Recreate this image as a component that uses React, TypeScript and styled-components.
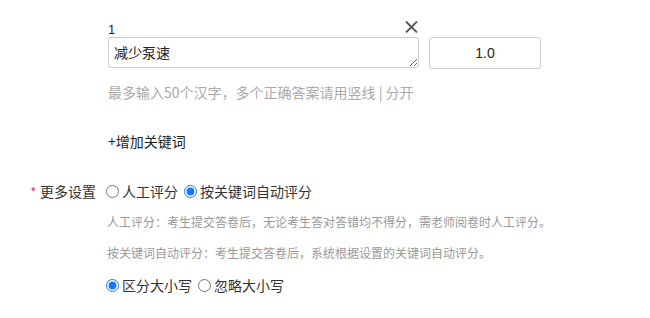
import { createGlobalStyle } from 'styled-components';
import styled from 'styled-components';

const GlobalStyle = createGlobalStyle`
  body {
    margin: 0;
    background: #fff;
    font-family: "Microsoft YaHei", "Noto Sans CJK SC", "Liberation Sans", sans-serif;
    color: #333;
  }
`;

const App = () => {
  return (
    <>
      <GlobalStyle />
      <Page>
        <KeywordBlock>
          <KeywordHead>
            <KeywordIndex>1</KeywordIndex>
            <CloseButton aria-label="删除">
              <svg width="13" height="12" viewBox="0 0 13 12">
                <path d="M1 0.5 L12 11.5 M12 0.5 L1 11.5" stroke="#555" strokeWidth="1.8" fill="none" />
              </svg>
            </CloseButton>
          </KeywordHead>
          <InputRow>
            <KeywordArea defaultValue="减少泵速" />
            <ScoreInput defaultValue="1.0" />
          </InputRow>
          <Hint>最多输入50个汉字，多个正确答案请用竖线 | 分开</Hint>
        </KeywordBlock>

        <AddKeyword>+增加关键词</AddKeyword>

        <FormItem>
          <FormLabel>
            <Required>*</Required>更多设置
          </FormLabel>
          <FormContent>
            <RadioRow>
              <RadioLabel>
                <Radio type="radio" name="mode" />
                人工评分
              </RadioLabel>
              <RadioLabel>
                <Radio type="radio" name="mode" defaultChecked />
                按关键词自动评分
              </RadioLabel>
            </RadioRow>
            <Desc>人工评分：考生提交答卷后，无论考生答对答错均不得分，需老师阅卷时人工评分。</Desc>
            <Desc>按关键词自动评分：考生提交答卷后，系统根据设置的关键词自动评分。</Desc>
            <RadioRow $top={12}>
              <RadioLabel>
                <Radio type="radio" name="case" defaultChecked />
                区分大小写
              </RadioLabel>
              <RadioLabel>
                <Radio type="radio" name="case" />
                忽略大小写
              </RadioLabel>
            </RadioRow>
          </FormContent>
        </FormItem>
      </Page>
    </>
  );
};

export default App;

const Page = styled.div`
  padding-top: 17px;
`;

const KeywordBlock = styled.div`
  margin-left: 108px;
  width: 433px;
`;

const KeywordHead = styled.div`
  width: 311px;
  height: 20px;
  display: flex;
  align-items: flex-end;
  justify-content: space-between;
`;

const KeywordIndex = styled.span`
  font-family: "Liberation Sans", sans-serif;
  font-size: 13px;
  line-height: 15px;
  color: #222;
`;

const CloseButton = styled.span`
  display: flex;
  margin-right: 1px;
  margin-bottom: 4px;
  cursor: pointer;
`;

const InputRow = styled.div`
  display: flex;
  gap: 10px;
`;

const KeywordArea = styled.textarea`
  box-sizing: border-box;
  width: 311px;
  height: 31px;
  padding: 4px 5px;
  border: 1px solid #ccc;
  border-radius: 3px;
  font-family: "Microsoft YaHei", "Noto Sans CJK SC", sans-serif;
  font-size: 14px;
  line-height: 20px;
  color: #222;
  resize: both;
  outline: none;
`;

const ScoreInput = styled.input`
  box-sizing: border-box;
  width: 112px;
  height: 32px;
  padding: 0 6px;
  border: 1px solid #ccc;
  border-radius: 3px;
  text-align: center;
  font-family: "Liberation Sans", sans-serif;
  font-size: 14px;
  color: #222;
  outline: none;
`;

const Hint = styled.div`
  margin-top: 13px;
  font-size: 14px;
  line-height: 20px;
  color: #aaa;
`;

const AddKeyword = styled.div`
  margin: 29px 0 0 108px;
  font-size: 14px;
  line-height: 20px;
  color: #222;
  cursor: pointer;
`;

const FormItem = styled.div`
  display: flex;
  margin-top: 30px;
`;

const FormLabel = styled.div`
  width: 100px;
  box-sizing: border-box;
  padding-right: 4px;
  text-align: right;
  font-size: 14px;
  line-height: 20px;
  color: #333;
`;

const Required = styled.span`
  color: #f5222d;
  margin-right: 4px;
  font-size: 12px;
`;

const FormContent = styled.div`
  display: flex;
  flex-direction: column;
`;

const RadioRow = styled.div<{ $top?: number }>`
  display: flex;
  align-items: center;
  margin-top: ${(p) => p.$top ?? 0}px;
  height: 20px;
`;

const RadioLabel = styled.label`
  display: flex;
  align-items: center;
  font-size: 14px;
  color: #333;
  cursor: pointer;
`;

const Radio = styled.input`
  width: 13px;
  height: 13px;
  margin: 0 3px 0 6px;
  accent-color: #1677ff;
`;

const Desc = styled.div`
  margin-top: 11px;
  margin-left: 7px;
  font-size: 12px;
  line-height: 20px;
  color: #999;
`;
